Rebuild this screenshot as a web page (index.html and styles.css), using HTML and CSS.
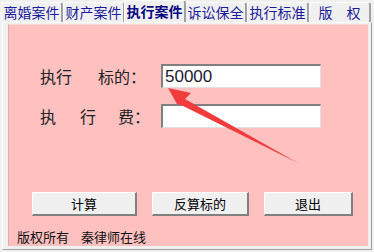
FILE: index.html
```html
<!DOCTYPE html>
<html>
	<head>
		<meta charset="utf-8">
		<title>执行案件</title>
		<link rel="stylesheet" href="styles.css">
	</head>
	<body>
		<div id="win">
			<ul id="tabs">
				<li>离婚案件</li>
				<li>财产案件</li>
				<li class="on">执行案件</li>
				<li>诉讼保全</li>
				<li>执行标准</li>
				<li class="wide">版&emsp;权</li>
			</ul>
			<div id="body">
				<div id="pink">
					<div class="row">
						<label class="lab"><span class="w1">执行</span>标的：</label>
						<input class="txt" type="text" value="50000">
					</div>
					<div class="row">
						<label class="lab"><span class="w2">执</span><span class="w3">行</span>费：</label>
						<input class="txt" type="text" value="">
					</div>
					<div id="btns">
						<div class="btn b1">计算</div>
						<div class="btn b2">反算标的</div>
						<div class="btn b3">退出</div>
					</div>
					<div id="foot">
						<span>版权所有</span>
						<span>秦律师在线</span>
					</div>
				</div>
			</div>
			<svg id="arrow" width="374" height="252" viewBox="0 0 374 252">
				<polygon points="168,88 191,93 185,99 298,163 181,105 177,104" fill="#f03c3c"/>
			</svg>
		</div>
	</body>
</html>
```

FILE: styles.css
```css
*{margin: 0;padding: 0;border: none;box-sizing: border-box;}
ul,li{list-style: none;}
body{background: #f0f0f0;font-family: "Noto Sans CJK SC","Liberation Sans",sans-serif;}
#win{width: 374px;height: 252px;position: relative;overflow: hidden;}
#tabs{display: flex;height: 22px;padding-left: 1px;align-items: flex-end;}
#tabs li{width: 62px;height: 20px;
		font-size: 14px;
		line-height: 19px;
		text-align: center;
		color: #1a1a9a;
		border-left: 1px solid #ffffff;
		border-top: 1px solid #ffffff;
		border-right: 2px solid #a0a0a0;
		border-top-left-radius: 3px;
		border-top-right-radius: 3px;
		}
#tabs li.on{height: 22px;font-weight: bold;color: #0a0a80;line-height: 21px;margin: 0 -1px;position: relative;z-index: 1;background: #f0f0f0;}
#body{margin: 0 2px;height: 228px;
		border-left: 1px solid #ffffff;
		border-top: 1px solid #ffffff;
		border-right: 1px solid #a0a0a0;
		border-bottom: 1px solid #a0a0a0;
		padding: 1px 3px 0 5px;
		}
#pink{background: #ffc0c0;height: 222px;width: 360px;
		border-top: 1px solid #ffd8d8;
		border-left: 1px solid #e8a8a8;
		padding: 39px 0 0 31px;
		}
.row{display: flex;align-items: center;height: 24px;margin-bottom: 16px;}
.lab{width: 121px;font-size: 16px;color: #222;white-space: nowrap;}
.lab span{display: inline-block;}
.w1{width: 58px;}
.w2{width: 40px;}
.w3{width: 38px;}
.txt{width: 160px;height: 24px;
		background: #fff;
		border-top: 2px solid #808080;
		border-left: 2px solid #808080;
		border-right: 1px solid #e0e0e0;
		border-bottom: 1px solid #e0e0e0;
		font-family: "Liberation Sans",sans-serif;
		font-size: 17px;
		color: #1a1a33;
		padding: 0 2px;
		outline: none;
		}
#btns{display: flex;margin-top: 64px;margin-left: -8px;gap: 15px;}
.btn{height: 24px;
		background: #f0f0f0;
		border-top: 1px solid #ffffff;
		border-left: 1px solid #ffffff;
		border-right: 2px solid #808080;
		border-bottom: 2px solid #808080;
		font-size: 13px;
		line-height: 21px;
		text-align: center;
		color: #000;
		}
.b1{width: 105px;}
.b2{width: 97px;}
.b3{width: 89px;}
#foot{margin: 11px 0 0 -23px;font-size: 13px;color: #111;display: flex;gap: 12px;}
#arrow{position: absolute;left: 0;top: 0;pointer-events: none;}
```
